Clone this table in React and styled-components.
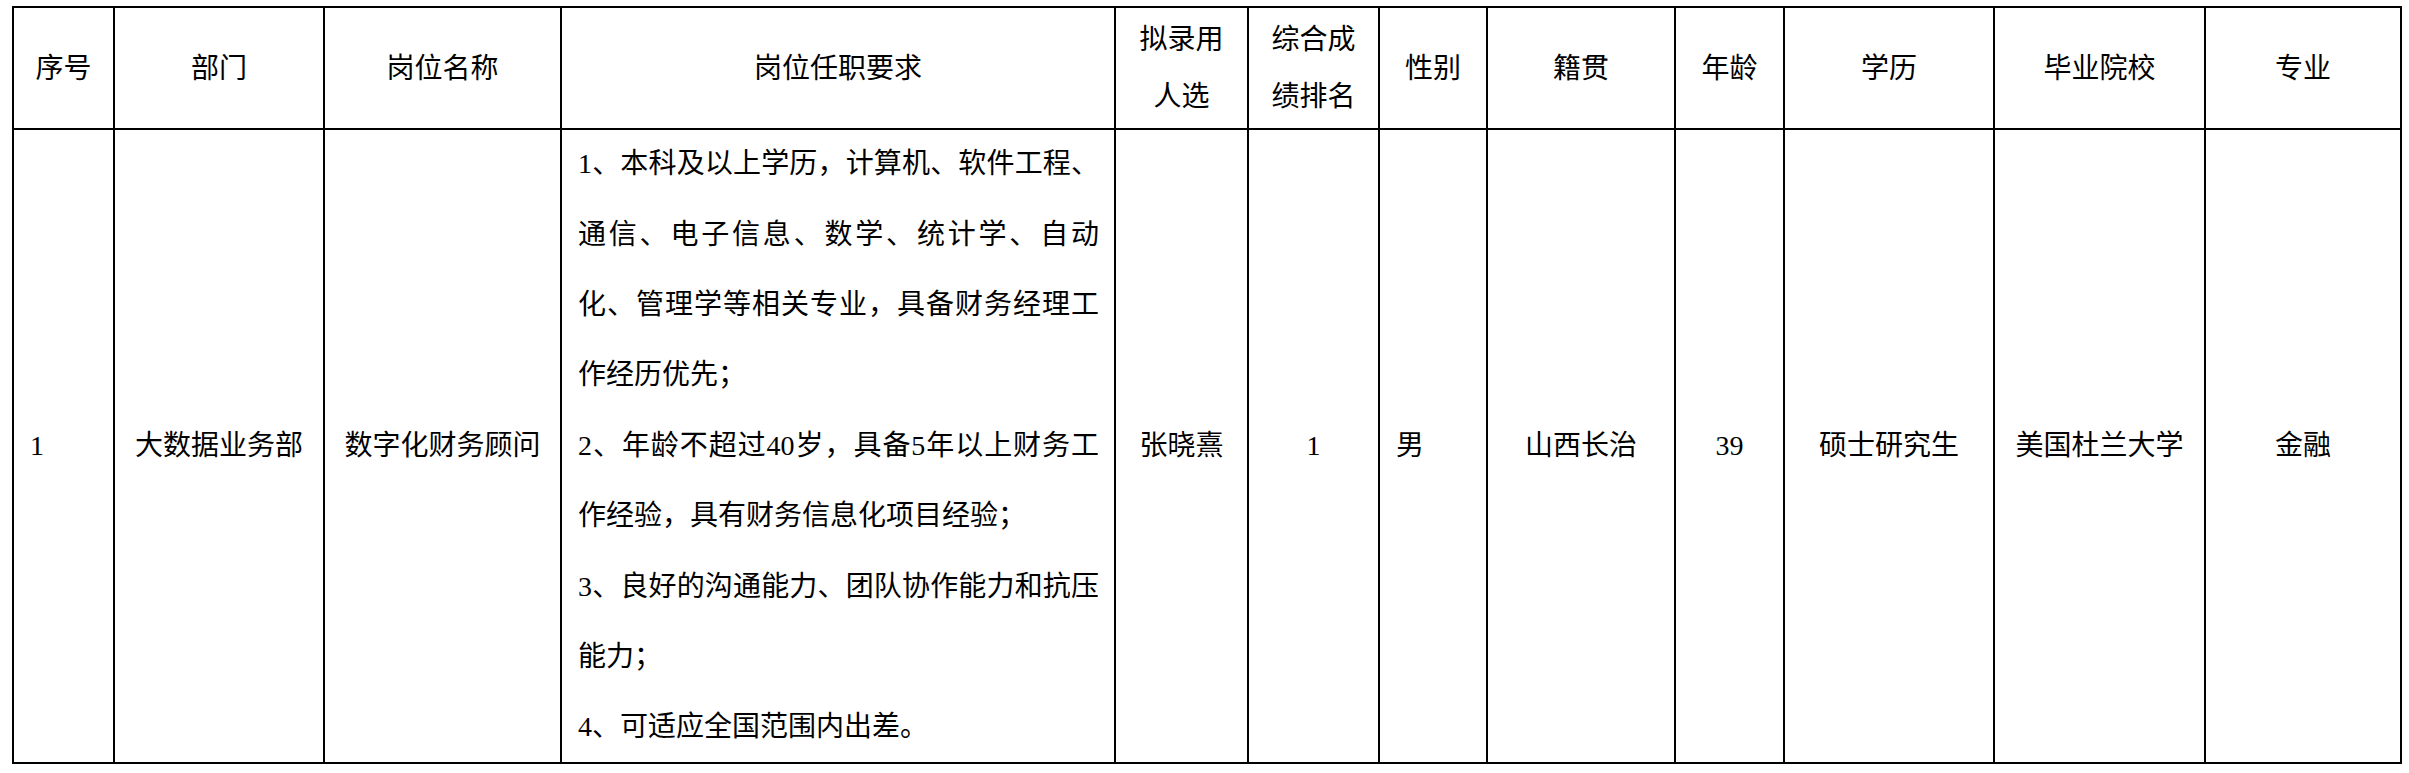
import React from "react";
import styled, { createGlobalStyle } from "styled-components";

const GlobalStyle = createGlobalStyle`
  html, body {
    margin: 0;
    padding: 0;
    background: #ffffff;
  }
  body {
    font-family: "Liberation Serif", "Noto Sans CJK SC", serif;
    color: #000000;
  }
`;

const Page = styled.div`
  padding: 6px 0 0 12px;
`;

const Table = styled.div`
  display: grid;
  grid-template-columns: 101px 210px 237px 554px 133px 131px 108px 188px 109px 210px 211px 196px;
  grid-template-rows: 122px 634px;
  width: max-content;
  border-left: 2px solid #000;
  border-top: 2px solid #000;
  font-family: "Liberation Serif", "Noto Sans CJK SC", serif;
  font-size: 28px;
  color: #000;
`;

const Cell = styled.div`
  box-sizing: border-box;
  border-right: 2px solid #000;
  border-bottom: 2px solid #000;
  display: flex;
  align-items: center;
  justify-content: ${(p) => (p.$align === "left" ? "flex-start" : "center")};
  padding: ${(p) => (p.$align === "left" ? "0 8px 0 16px" : "0 4px")};
  white-space: nowrap;
`;

const HeadCell = styled(Cell)`
  text-align: center;
  line-height: 57px;
`;

const BodyCell = styled(Cell)`
  line-height: 34px;
`;

const RequirementCell = styled.div`
  box-sizing: border-box;
  border-right: 2px solid #000;
  border-bottom: 2px solid #000;
  display: flex;
  flex-direction: column;
  justify-content: center;
  padding: 0 15px 0 16px;
`;

const ReqLine = styled.div`
  line-height: 70.4px;
  white-space: nowrap;
  text-align: ${(p) => (p.$justify ? "justify" : "left")};
  text-align-last: ${(p) => (p.$justify ? "justify" : "left")};
`;

const headers = [
  { label: ["序号"] },
  { label: ["部门"] },
  { label: ["岗位名称"] },
  { label: ["岗位任职要求"] },
  { label: ["拟录用", "人选"] },
  { label: ["综合成", "绩排名"] },
  { label: ["性别"] },
  { label: ["籍贯"] },
  { label: ["年龄"] },
  { label: ["学历"] },
  { label: ["毕业院校"] },
  { label: ["专业"] },
];

const requirements = [
  [
    "1、本科及以上学历，计算机、软件工程、",
    "通信、电子信息、数学、统计学、自动",
    "化、管理学等相关专业，具备财务经理工",
    "作经历优先；",
  ],
  ["2、年龄不超过40岁，具备5年以上财务工", "作经验，具有财务信息化项目经验；"],
  ["3、良好的沟通能力、团队协作能力和抗压", "能力；"],
  ["4、可适应全国范围内出差。"],
];

const row = {
  index: "1",
  dept: "大数据业务部",
  title: "数字化财务顾问",
  person: "张晓熹",
  rank: "1",
  gender: "男",
  origin: "山西长治",
  age: "39",
  degree: "硕士研究生",
  school: "美国杜兰大学",
  major: "金融",
};

export default function App() {
  return (
    <>
      <GlobalStyle />
      <Page>
        <Table>
          {headers.map((h, i) => (
            <HeadCell key={i}>
              <div>
                {h.label.map((l, j) => (
                  <div key={j}>{l}</div>
                ))}
              </div>
            </HeadCell>
          ))}
          <BodyCell $align="left">{row.index}</BodyCell>
          <BodyCell>{row.dept}</BodyCell>
          <BodyCell>{row.title}</BodyCell>
          <RequirementCell>
            {requirements.map((para, pi) =>
              para.map((line, li) => (
                <ReqLine key={`${pi}-${li}`} $justify={li < para.length - 1}>
                  {line}
                </ReqLine>
              ))
            )}
          </RequirementCell>
          <BodyCell>{row.person}</BodyCell>
          <BodyCell>{row.rank}</BodyCell>
          <BodyCell $align="left">{row.gender}</BodyCell>
          <BodyCell>{row.origin}</BodyCell>
          <BodyCell>{row.age}</BodyCell>
          <BodyCell>{row.degree}</BodyCell>
          <BodyCell>{row.school}</BodyCell>
          <BodyCell>{row.major}</BodyCell>
        </Table>
      </Page>
    </>
  );
}
